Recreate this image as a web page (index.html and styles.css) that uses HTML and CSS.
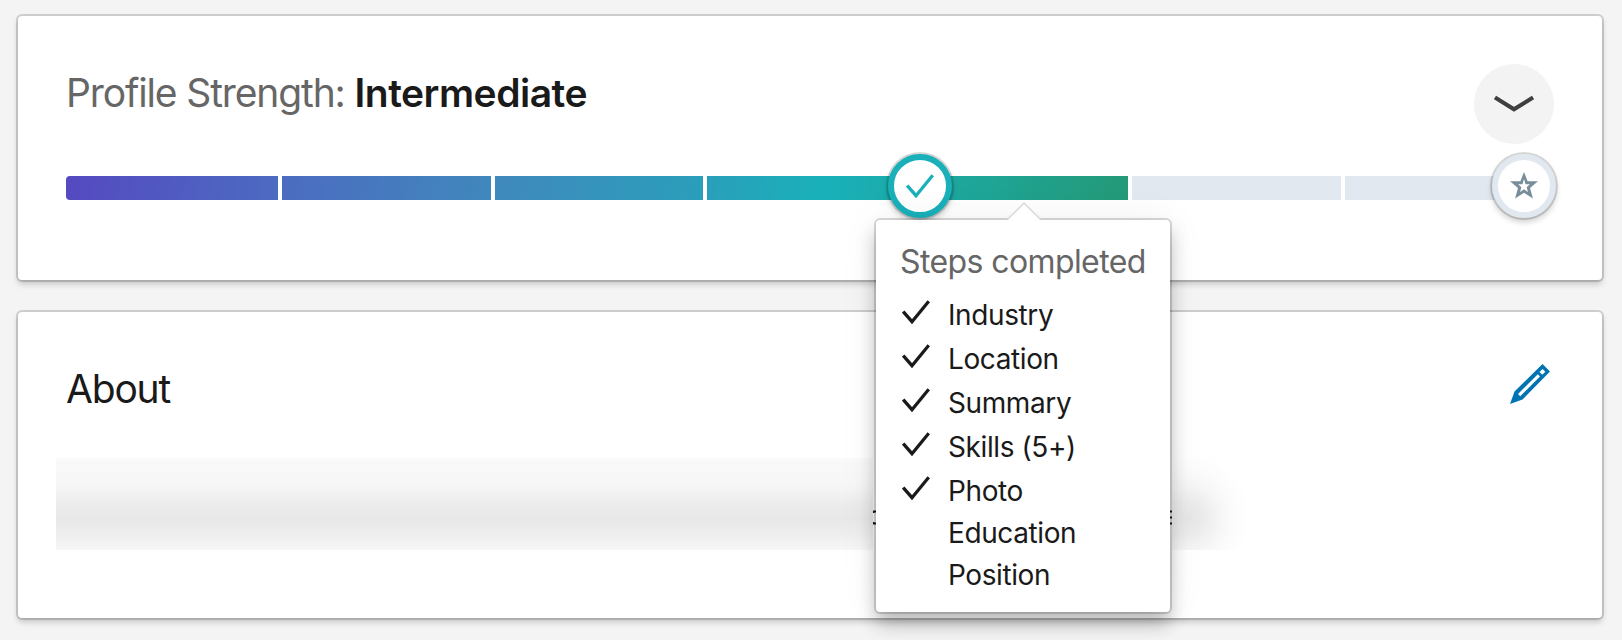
FILE: index.html
```html
<!DOCTYPE html>
<html lang="en">
<head>
<meta charset="utf-8">
<title>Profile</title>
<link rel="stylesheet" href="styles.css">
</head>
<body>
<svg class="symbols" aria-hidden="true">
  <symbol id="check" viewBox="0 0 28 24"><path d="M1.200 11.500 10 21.700 26.800 1.200" fill="none" stroke="currentColor" stroke-width="3.300"/></symbol>
</svg>
<main class="page">
  <section class="card strength">
    <header class="card-head">
      <h2 class="title muted"><span class="label">Profile Strength:</span> <strong class="level">Intermediate</strong></h2>
      <button class="toggle" aria-label="Collapse">
        <svg width="40" height="18" viewBox="0 0 40 18"><path d="M1 2.500 20 14.300 39 2.500" fill="none" stroke="#3f3f3f" stroke-width="4"/></svg>
      </button>
    </header>
    <div class="meter">
      <div class="track">
        <i class="seg"></i><i class="seg"></i><i class="seg"></i><i class="seg"></i><i class="seg"></i><i class="seg"></i><i class="seg"></i>
      </div>
      <span class="marker current"><svg width="28" height="24"><use href="#check"/></svg></span>
      <span class="marker goal"><svg width="28" height="28" viewBox="0 0 28 28"><path fill="#788d9a" fill-rule="evenodd" d="M14 0 17.600 9.200H28L20 16 22.900 26.600 14 20.800 5.100 26.600 8 16 0 9.200H10.400ZM14 7 12.400 12.300H8.200L11.300 15.300 10.100 20 14 17.300 17.900 20 16.700 15.300 19.800 12.300H15.600Z"/></svg></span>
      <div class="tooltip">
        <svg class="arrow" width="36" height="19" viewBox="0 0 36 19"><path d="M1 18 18 1 35 18V19H1Z" fill="#fff"/><path d="M1 18 18 1 35 18" fill="none" stroke="#d9d9d9" stroke-width="1.500"/></svg>
        <h3 class="tip-title">Steps completed</h3>
        <ul class="steps">
          <li class="step done"><svg class="tick"><use href="#check"/></svg><span>Industry</span></li>
          <li class="step done"><svg class="tick"><use href="#check"/></svg><span>Location</span></li>
          <li class="step done"><svg class="tick"><use href="#check"/></svg><span>Summary</span></li>
          <li class="step done"><svg class="tick"><use href="#check"/></svg><span>Skills (5+)</span></li>
          <li class="step done"><svg class="tick"><use href="#check"/></svg><span>Photo</span></li>
          <li class="step"><span>Education</span></li>
          <li class="step"><span>Position</span></li>
        </ul>
      </div>
    </div>
  </section>
  <section class="card about">
    <header class="card-head">
      <h2 class="title">About</h2>
      <svg class="edit" width="40" height="40" viewBox="0 0 40 40"><path fill="#0073b1" fill-rule="evenodd" d="M32.500 0 40 7.500 12.500 35.500 0 40 4.500 27.500ZM32.500 5 29.500 8 32.300 10.800 35.300 7.800ZM27.800 10.300 8 30 10.200 32.200 30 12.500Z"/></svg>
    </header>
    <div class="summary">
      <div class="blur"></div>
      <svg class="remnant" width="299" height="100" viewBox="0 0 299 100"><path d="M.5 63V61.500H4M.5 72V73.500H4M296 61.500H299M296 67.500H299M296 73.500H299" fill="none" stroke="#1a1a1a" stroke-width="2"/></svg>
      <div class="blur-end"></div>
    </div>
  </section>
</main>
</body>
</html>
```
FILE: styles.css
```css
* { box-sizing: border-box; }
body { margin: 0; background: #f4f4f4; font-family: Inter, "Liberation Sans", sans-serif; color: #1a1a1a; height: 640px; overflow: hidden; }
.symbols { position: absolute; width: 0; height: 0; }
.page { display: flex; flex-direction: column; gap: 32px; padding: 16px 20px 0 18px; }
.card { background: #fff; border-radius: 4px; box-shadow: 0 0 0 2px rgba(0,0,0,.15), 0 4px 6px rgba(0,0,0,.2); padding: 0 48px; }
.strength { height: 264px; position: relative; z-index: 1; }
.about { height: 306px; }
.card-head { display: flex; justify-content: space-between; }
.title { margin: 0; font-size: 39px; line-height: 48px; font-weight: 400; letter-spacing: -1.2px; white-space: nowrap; }
.strength .card-head { height: 160px; padding-top: 48px; }
.strength .title { padding-top: 5px; }
.muted { color: #666; }
.label { letter-spacing: -1.13px; }
.level { color: #1a1a1a; font-weight: 600; letter-spacing: -.5px; }
.toggle { width: 80px; height: 80px; border: 0; border-radius: 50%; background: #f3f3f3; padding: 0; display: grid; place-items: center; }
.meter { position: relative; width: 1487px; height: 24px; }
.track { display: flex; height: 24px; border-radius: 4px; overflow: hidden; background: linear-gradient(97deg, #5549c1 0, #4c6bc1 212px, #4088bc 424px, #2a9fbb 637px, #19b0b9 750px, #19b0b9 760px, #249975 1064px); }
.seg { width: 14.2857%; border-left: 4px solid #fff; }
.seg:first-child { border-left: 0; }
.seg:nth-child(n+6) { background: #e1e8ef; }
.marker { position: absolute; top: -22px; width: 64px; height: 64px; border-radius: 50%; background: #fff; display: grid; place-items: center; box-shadow: 0 0 0 2px rgba(0,0,0,.15), 0 4px 6px rgba(0,0,0,.2); }
.current { left: 822px; border: 6px solid #19b0b9; color: #19b0b9; }
.goal { left: 1426px; border: 6px solid #e1e8ef; }
.tooltip { position: absolute; left: 810px; top: 44px; width: 294px; height: 392px; background: #fff; border-radius: 4px; padding: 18px 24px; box-shadow: 0 0 0 2px rgba(0,0,0,.15), 0 12px 18px rgba(0,0,0,.25), 0 0 40px rgba(0,0,0,.06); }
.arrow { position: absolute; left: 130px; top: -18px; }
.tip-title { margin: 0; font-size: 32px; line-height: 48px; font-weight: 400; letter-spacing: -.6px; color: #666; white-space: nowrap; }
.steps { list-style: none; margin: 8px 0 0; padding: 0 0 0 2px; font-size: 28px; line-height: 42px; letter-spacing: -.4px; }
.step { display: flex; height: 42px; padding-left: 46px; }
.done { height: 44px; padding-left: 0; gap: 18px; }
.done:nth-child(5) { height: 42px; }
.tick { width: 28px; height: 24px; margin-top: 6px; flex: none; }
.about .card-head { padding-top: 52px; height: 138px; }
.about .title { padding-top: 1px; }
.edit { margin: 0 4px 0 0; }
.summary { display: flex; align-items: flex-end; margin-left: -10px; height: 100px; }
.blur { width: 817px; height: 92px; background: linear-gradient(#fafafa 0, #f6f6f6 30%, #ebebeb 52%, #e8e8e8 66%, #eee 83%, #f6f6f6 100%); }
.blur-end { width: 84px; height: 100px; background: radial-gradient(ellipse 60px 66px at 18px 68px, #e6e6e6 0, #ececec 25%, #f6f6f6 50%, #fcfcfc 75%, #fff 100%); }
```
